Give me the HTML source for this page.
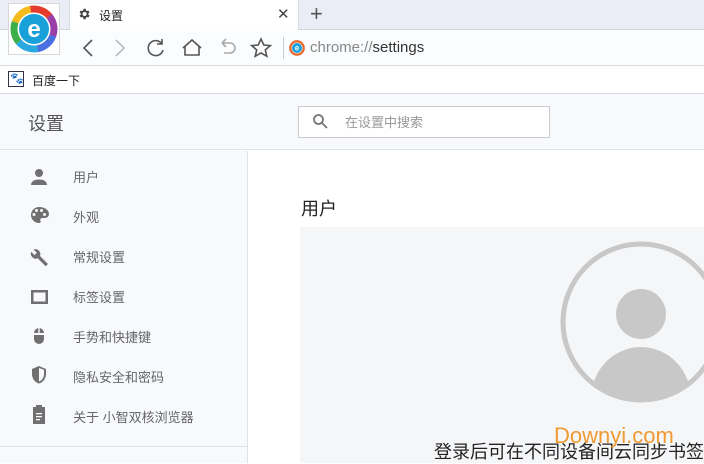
<!DOCTYPE html>
<html><head><meta charset="utf-8">
<style>
*{margin:0;padding:0;box-sizing:border-box}
body{width:704px;height:463px;overflow:hidden;background:#fff;font-family:"Liberation Sans","Noto Sans CJK SC",sans-serif;position:relative}
.abs{position:absolute}
.t{font-size:13px;color:#666}
</style></head><body>
<!-- tab bar -->
<div class="abs" style="left:0;top:0;width:704px;height:30px;background:#eaedf5;border-bottom:1px solid #d0d3d8"></div>
<div class="abs" style="left:69px;top:0;width:230px;height:30px;background:#fff;border-left:1px solid #d8dbe0;border-right:1px solid #d8dbe0"></div>
<svg class="abs" style="left:77px;top:7px" width="14" height="14" viewBox="0 0 24 24"><path fill="#444" d="M19.4 13a7.5 7.5 0 000-2l2.1-1.6-2-3.5-2.5 1a7 7 0 00-1.7-1L15 3h-4l-.4 2.9a7 7 0 00-1.7 1l-2.5-1-2 3.5L6.6 11a7.5 7.5 0 000 2l-2.1 1.6 2 3.5 2.5-1a7 7 0 001.7 1L11 21h4l.4-2.9a7 7 0 001.7-1l2.5 1 2-3.5zM13 15.5a3.5 3.5 0 110-7 3.5 3.5 0 010 7z"/></svg>
<div class="abs" style="left:99px;top:7px;font-size:12px;color:#222">设置</div>
<div class="abs" style="left:277px;top:5px;font-size:15px;color:#444">✕</div>
<div class="abs" style="left:310px;top:1px;font-size:22px;color:#555;font-weight:300">+</div>
<!-- nav row -->
<div class="abs" style="left:0;top:31px;width:704px;height:35px;background:#fafcfe;border-bottom:1px solid #d8dbe0"></div>
<div class="abs" style="left:8px;top:3px;width:52px;height:52px;background:#fff;border:1px solid #d8d8d8"></div>
<svg class="abs" style="left:10px;top:5px" width="48" height="48" viewBox="0 0 48 48">
<circle cx="24" cy="24" r="20" fill="none" stroke="#e63c2e" stroke-width="7" stroke-dasharray="21 200" transform="rotate(-100 24 24)"/>
<circle cx="24" cy="24" r="20" fill="none" stroke="#9b3fa8" stroke-width="7" stroke-dasharray="21 200" transform="rotate(-40 24 24)"/>
<circle cx="24" cy="24" r="20" fill="none" stroke="#4a6fe0" stroke-width="7" stroke-dasharray="21 200" transform="rotate(20 24 24)"/>
<circle cx="24" cy="24" r="20" fill="none" stroke="#2aa9e0" stroke-width="7" stroke-dasharray="21 200" transform="rotate(80 24 24)"/>
<circle cx="24" cy="24" r="20" fill="none" stroke="#3cae4a" stroke-width="7" stroke-dasharray="21 200" transform="rotate(140 24 24)"/>
<circle cx="24" cy="24" r="20" fill="none" stroke="#f6b91e" stroke-width="7" stroke-dasharray="21 200" transform="rotate(200 24 24)"/>
<circle cx="24" cy="24" r="15" fill="#1aa0d8"/>
<text x="24" y="32" text-anchor="middle" font-size="24" font-weight="bold" fill="#fff" font-family="Liberation Sans">e</text>
</svg>
<svg class="abs" style="left:76px;top:36px" width="200" height="24" viewBox="0 0 200 24" fill="none" stroke="#555" stroke-width="1.6">
<path d="M16 4l-8 8 8 8"/>
<path d="M40 4l8 8-8 8" stroke="#bbb"/>
<path d="M86 8a7.5 7.5 0 10 1 6M86 3v5h-5"/>
<path d="M107 12l9-8 9 8M109 10v9h14v-9"/>
<path d="M146 7h8a5 5 0 010 10h-6M146 7l4-4M146 7l4 4" stroke="#aaa"/>
<path d="M185 3l2.8 6 6.5.6-5 4.3 1.5 6.4-5.8-3.4-5.8 3.4 1.5-6.4-5-4.3 6.5-.6z"/>
</svg>
<div class="abs" style="left:283px;top:37px;width:1px;height:22px;background:#ccc"></div>
<svg class="abs" style="left:289px;top:40px" width="16" height="16" viewBox="0 0 48 48"><circle cx="24" cy="24" r="20" fill="none" stroke="#e86a2e" stroke-width="7"/><circle cx="24" cy="24" r="15" fill="#1aa0d8"/><text x="24" y="32" text-anchor="middle" font-size="24" font-weight="bold" fill="#fff">e</text></svg>
<div class="abs" style="left:310px;top:39px;font-size:15px;color:#888">chrome://<span style="color:#333">settings</span></div>
<!-- bookmarks -->
<div class="abs" style="left:0;top:67px;width:704px;height:27px;background:#fff;border-bottom:1px solid #d8dbe0"></div>
<div class="abs" style="left:8px;top:71px;width:16px;height:16px;border:1px solid #334;background:#fff"></div>
<div class="abs" style="left:10px;top:72px;font-size:11px;color:#2932e1">🐾</div>
<div class="abs" style="left:32px;top:72px;font-size:12px;color:#222">百度一下</div>
<!-- header -->
<div class="abs" style="left:0;top:94px;width:704px;height:56px;background:#f7f9fc;border-bottom:1px solid #dfe2e7"></div>
<div class="abs" style="left:28px;top:110px;font-size:18px;color:#555">设置</div>
<div class="abs" style="left:298px;top:106px;width:252px;height:32px;background:#fff;border:1px solid #ccc"></div>
<svg class="abs" style="left:312px;top:113px" width="16" height="16" viewBox="0 0 16 16" fill="none" stroke="#777" stroke-width="1.8"><circle cx="6.5" cy="6.5" r="4.5"/><path d="M10 10l5 5"/></svg>
<div class="abs" style="left:345px;top:112px;font-size:13px;color:#999">在设置中搜索</div>
<!-- sidebar -->
<div class="abs" style="left:0;top:151px;width:248px;height:312px;background:#f7f9fc;border-right:1px solid #dfe2e7"></div>
<div class="abs" style="left:0;top:446px;width:248px;height:1px;background:#dfe2e7"></div>
<svg class="abs" style="left:28px;top:166px" width="22" height="260" viewBox="0 0 22 260" fill="#707070">
<circle cx="11" cy="7" r="4"/><path d="M3 19c0-4 4-5.5 8-5.5s8 1.5 8 5.5z"/>
<path d="M11 41a8 8 0 000 16c1.5 0 2-1 1.5-2-.8-1.5.3-3 2-3H17a4 4 0 004-4c0-4-4.5-7-10-7zM6 50a1.5 1.5 0 110-3 1.5 1.5 0 010 3zm2.5-4a1.5 1.5 0 110-3 1.5 1.5 0 010 3zm5 0a1.5 1.5 0 110-3 1.5 1.5 0 010 3zm3 4a1.5 1.5 0 110-3 1.5 1.5 0 010 3z"/>
<path d="M20 98l-8-8a5 5 0 00-6.5-6.5l3.3 3.3-2.3 2.3-3.3-3.3A5 5 0 009.7 92.3l8 8z"/>
<path d="M3 124h17v14H3zm2.5 2.5v9h12v-9z" fill-rule="evenodd"/>
<path d="M6 167a5 5 0 0110 0zm0 2h10v4a5 5 0 01-10 0z"/><rect x="10.3" y="161" width="1.4" height="7" fill="#f7f9fc"/>
<path d="M11 200l-7 3v5c0 4.5 3 8.5 7 9.5 4-1 7-5 7-9.5v-5zm0 2v13.5c3-1 5-4 5-7.5v-4.3z" fill-rule="evenodd"/>
<path d="M5 241h12v17H5zM8 239h6v3H8z"/><rect x="8" y="247" width="6" height="1.3" fill="#f7f9fc"/><rect x="8" y="250" width="6" height="1.3" fill="#f7f9fc"/><rect x="8" y="253" width="4" height="1.3" fill="#f7f9fc"/>
</svg>
<div class="abs t" style="left:73px;top:167px">用户</div>
<div class="abs t" style="left:73px;top:207px">外观</div>
<div class="abs t" style="left:73px;top:247px">常规设置</div>
<div class="abs t" style="left:73px;top:287px">标签设置</div>
<div class="abs t" style="left:73px;top:327px">手势和快捷键</div>
<div class="abs t" style="left:73px;top:367px">隐私安全和密码</div>
<div class="abs t" style="left:73px;top:407px">关于 小智双核浏览器</div>
<!-- main -->
<div class="abs" style="left:301px;top:195px;font-size:18px;color:#222">用户</div>
<div class="abs" style="left:300px;top:227px;width:404px;height:236px;background:#f5f6f8"></div>
<svg class="abs" style="left:555px;top:236px" width="149" height="175" viewBox="0 0 149 175">
<defs><clipPath id="c"><circle cx="86" cy="86" r="77"/></clipPath></defs>
<circle cx="86" cy="86" r="78" fill="none" stroke="#c8c8c8" stroke-width="5"/>
<circle cx="86" cy="78" r="25" fill="#c8c8c8"/>
<ellipse cx="86" cy="163" rx="50" ry="52" fill="#c8c8c8" clip-path="url(#c)"/>
</svg>
<div class="abs" style="left:434px;top:438px;font-size:18px;color:#222;white-space:nowrap">登录后可在不同设备间云同步书签</div>
<div class="abs" style="left:554px;top:423px;font-size:22px;color:#f08a10;opacity:.85;white-space:nowrap">Downyi.com</div>
</body></html>
